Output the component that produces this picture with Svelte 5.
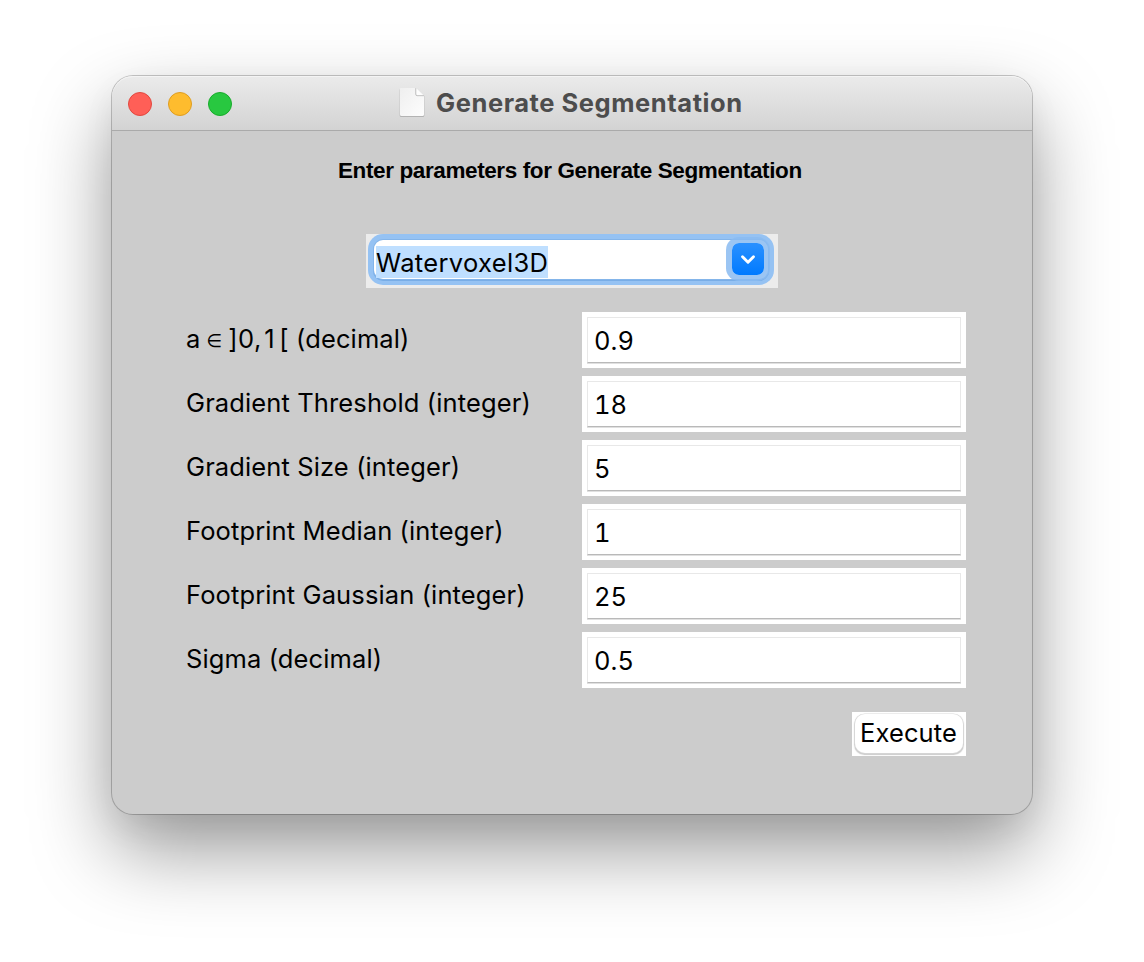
<script>
  let algorithm = $state('Watervoxel3D');
  const fields = [
    { label: 'Gradient Threshold (integer)', value: '18' },
    { label: 'Gradient Size (integer)', value: '5' },
    { label: 'Footprint Median (integer)', value: '1' },
    { label: 'Footprint Gaussian (integer)', value: '25' },
    { label: 'Sigma (decimal)', value: '0.5' }
  ];
</script>

<div class="desktop">
  <main class="window">
    <header>
      <div class="lights"><i class="close"></i><i class="minimize"></i><i class="zoom"></i></div>
      <div class="title">
        <svg width="28" height="32" viewBox="0 0 28 32">
          <defs><linearGradient id="paper" x2="1" y2="1"><stop stop-color="#efefef" /><stop offset="1" stop-color="#fdfdfd" /></linearGradient></defs>
          <path d="M2.5 2H18l8.300 7V28.500q0 1.500-1.500 1.500H3.200Q1.700 30 1.700 28.500V3Q1.700 2 2.500 2Z" fill="#999" opacity=".6" />
          <path d="M2.500 1H17.700v6.500q0 1.300 1.300 1.300h7V27.500q0 1.500-1.500 1.500H3.500Q2 29 2 27.500V2Q2 1 2.500 1Z" fill="url(#paper)" />
          <path d="M18 1v6q0 1.500 1.500 1.500H26Z" fill="#fdfdfd" />
          <path d="M17.800 1v6.300q0 1.400 1.400 1.400H26" fill="none" stroke="#bbb" stroke-width=".8" />
        </svg>
        <span>Generate Segmentation</span>
      </div>
    </header>
    <h1>Enter parameters for Generate Segmentation</h1>
    <div class="combo-wrap">
      <div class="combo">
        <span class="selected">{algorithm}</span>
        <span class="arrow"><svg width="32" height="32" viewBox="0 0 32 32"><path d="M10.500 13.800L16 19.300l5.500-5.500" fill="none" stroke="#fff" stroke-width="2.900" stroke-linecap="round" stroke-linejoin="round" /></svg></span>
      </div>
    </div>
    <div class="form">
      <div class="row">
        <span class="label range"><span>a</span><span class="member">∈</span><span class="interval">]0,<span class="upper">1</span>[</span><span>(decimal)</span></span>
        <div class="field"><div class="inner">0.9</div></div>
      </div>
      {#each fields as field}
        <div class="row">
          <span class="label">{field.label}</span>
          <div class="field"><div class="inner">{field.value}</div></div>
        </div>
      {/each}
    </div>
    <div class="actions"><div class="button-wrap"><button>Execute</button></div></div>
  </main>
</div>

<style>
  :global(body) { margin: 0; background: #fff; }
  * { box-sizing: border-box; }
  .desktop { width: 1144px; height: 962px; padding: 76px 112px; overflow: hidden; font-family: Inter, sans-serif; color: #000; }
  .window { width: 920px; height: 738px; border-radius: 21px; background: #ccc; box-shadow: 0 0 0 1px rgba(0,0,0,.21), 0 36px 80px rgba(0,0,0,.4), 0 14px 34px rgba(0,0,0,.05); display: flex; flex-direction: column; }
  header { height: 55px; flex: none; border-radius: 21px 21px 0 0; border-bottom: 1px solid #aaa; background: linear-gradient(#ebebeb, #d3d3d3); box-shadow: inset 0 1px #f4f4f4; display: grid; grid-template-columns: 287px 1fr; align-items: center; }
  .lights { display: flex; gap: 16px; padding: 2px 0 0 16px; }
  .lights i { width: 24px; height: 24px; border-radius: 50%; border: 1px solid; }
  .lights .close { background: #ff5f57; border-color: #e2483f; }
  .lights .minimize { background: #febc2e; border-color: #df9d20; }
  .lights .zoom { background: #28c840; border-color: #18ac2b; }
  .title { display: flex; align-items: center; font-weight: 700; font-size: 25.500px; letter-spacing: .56px; color: #4d4d4d; line-height: 32px; white-space: nowrap; }
  .title svg { margin-left: -1px; margin-right: 10px; }
  h1 { margin: 26px 0 0 226px; height: 28px; font: 700 22.500px/28px "Liberation Sans", Arial, sans-serif; letter-spacing: -.39px; white-space: nowrap; }
  .combo-wrap { width: 412px; height: 54px; margin: 49px 0 0 254px; padding: 6px 10px 9px 8px; background: #ececec; flex: none; }
  .combo { height: 39px; border-radius: 9px; background: #fff; box-shadow: 0 0 0 1px #84b5ea, 0 1px 0 1px #79ade6, 0 0 0 6px #95c2f3; display: flex; align-items: flex-start; justify-content: space-between; padding: 3px 4px 0 2px; }
  .selected { height: 32px; margin-top: 3px; background: #bfdfff; font-size: 25.500px; letter-spacing: .34px; line-height: 33px; white-space: nowrap; }
  .arrow { width: 32px; height: 32px; border-radius: 7px; background: linear-gradient(#2b91ff, #007aff); box-shadow: 0 0 0 6px rgba(137,187,241,.85); }
  .arrow svg { display: block; }
  .form { margin: 24px 66px 0 74px; display: flex; flex-direction: column; gap: 8px; }
  .row { height: 56px; display: grid; grid-template: 56px / 396px 384px; }
  .label { font-size: 25.500px; line-height: 54px; letter-spacing: .12px; white-space: nowrap; }
  .range { display: flex; }
  .member { font-family: "DejaVu Sans", sans-serif; font-size: 18px; margin: 0 6px; line-height: 57px; }
  .interval { letter-spacing: .5px; margin-right: 7px; }
  .upper { margin: 0 4px 0 2.500px; }
  .field { padding: 5px; background: #fff; }
  .inner { height: 46px; padding-left: 6px; border: 1px solid #e8e8e8; border-bottom-color: #b9b9b9; box-shadow: 0 1px #e0e0e0; font-size: 25.500px; line-height: 46px; font-variant-numeric: tabular-nums; }
  .actions { display: flex; justify-content: flex-end; padding: 24px 66px 0 0; }
  .button-wrap { width: 114px; height: 44px; padding: 2px 3px; background: #fff; }
  button { width: 108px; height: 39px; padding: 0 1px 2px 0; border: 0; border-radius: 10px; background: #fff; box-shadow: 0 0 0 .5px #ddd, 0 1px 1px .5px #ccc; color: #000; font: 25.500px/37px Inter, sans-serif; letter-spacing: .1px; white-space: nowrap; }
</style>
